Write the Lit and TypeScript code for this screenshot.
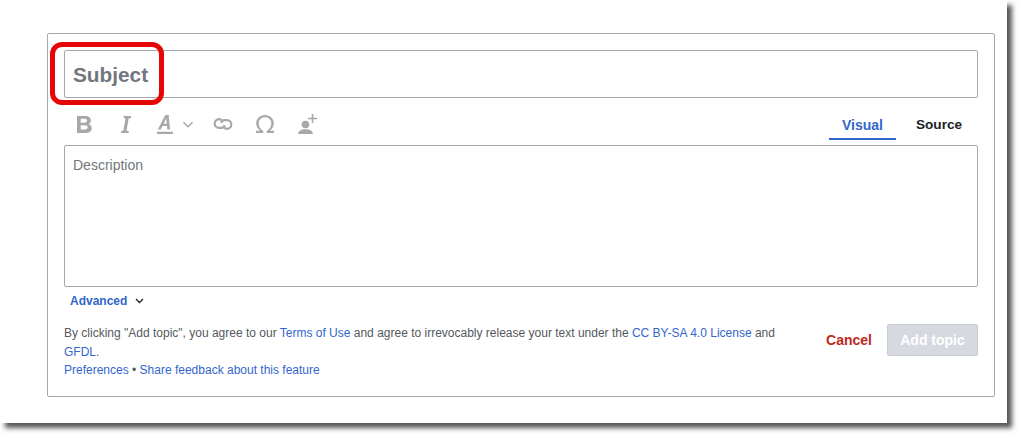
import { LitElement, html, css } from "lit";
import { customElement } from "lit/decorators.js";

@customElement("app-root")
export class AppRoot extends LitElement {
  static styles = css`
    :host { display: block; background: #fff; height: 438px; overflow: hidden; font-family: "Liberation Sans", Arial, sans-serif; }
    .sheet { width: 1007px; height: 423px; box-sizing: border-box; padding: 33px 12px 0 47px; background: #fff; box-shadow: 5px 5px 5px #555; position: relative; }
    .panel { width: 948px; height: 364px; box-sizing: border-box; border: 1px solid #a2a9b1; border-radius: 2px; padding: 16px 16px 0 16px; position: relative; }
    .subject { height: 48px; box-sizing: border-box; border: 1px solid #a2a9b1; border-radius: 2px; padding: 2px 8px 0; display: flex; align-items: center; font-size: 20.8px; font-weight: 700; color: #72777d; }
    .toolbar { height: 47px; display: flex; align-items: flex-start; }
    .icons { flex: 1; height: 47px; position: relative; }
    .ic { position: absolute; display: block; }
    .tabs { display: flex; padding-top: 12px; }
    .tab { font-size: 14px; font-weight: 700; height: 30px; box-sizing: border-box; padding-top: 7px; text-align: center; }
    .tab.visual { width: 67px; color: #3366cc; border-bottom: 2px solid #3366cc; }
    .tab.source { width: 82px; color: #202122; padding-left: 4px; font-size: 13.6px; }
    .desc { height: 142px; box-sizing: border-box; border: 1px solid #a2a9b1; border-radius: 2px; padding: 11px 8px; font-size: 14px; line-height: 16px; color: #72777d; }
    .advanced { display: flex; align-items: center; gap: 7px; margin: 6px 0 0 6px; height: 16px; font-size: 12px; font-weight: 700; color: #3366cc; }
    .foot { display: flex; margin-top: 15px; }
    .legal { width: 724px; font-size: 12px; line-height: 18.5px; color: #54595d; }
    .legal a { color: #3366cc; text-decoration: none; }
    .actions { flex: 1; display: flex; align-items: flex-start; justify-content: flex-end; gap: 15px; }
    .cancel { font-size: 14px; font-weight: 700; color: #c1281c; height: 32px; line-height: 32px; }
    .add { width: 91px; height: 32px; box-sizing: border-box; background: #d6d9df; border: 1px solid #c8ccd1; border-radius: 2px; color: #fff; font-size: 14px; font-weight: 700; display: flex; align-items: center; justify-content: center; }
    .callout { position: absolute; left: 50px; top: 42px; width: 114px; height: 63px; box-sizing: border-box; border: 5px solid #e50606; border-radius: 12px; }
  `;

  render() {
    return html`
      <div class="sheet">
        <div class="panel">
          <div class="subject">Subject</div>
          <div class="toolbar">
            <div class="icons">
              <svg class="ic" style="left:13px;top:18px" width="15" height="17" viewBox="1 2 13.800 16.600" preserveAspectRatio="none"><path fill="#a8a8a8" fill-rule="evenodd" d="M1 2h7.200c3.600 0 5.600 1.500 5.600 4.400 0 1.700-.9 3-2.400 3.500 2 .5 3.200 2 3.200 4.100 0 3-2.200 4.600-6 4.600H1zm3.400 2.800v3.700h3.300c1.600 0 2.500-.7 2.500-1.900 0-1.200-.9-1.800-2.500-1.800zm0 6.300v4.100h3.700c1.800 0 2.800-.7 2.800-2.100 0-1.300-1-2-2.800-2z"/></svg>
              <svg class="ic" style="left:57px;top:18px" width="10" height="17" viewBox="2 2 11 16" preserveAspectRatio="none"><path fill="#a8a8a8" d="M5 2h8v1.800l-2.600.5-2.300 11.400 2.400.6V18H2v-1.700l2.600-.6L7 4.300 5 3.800z"/></svg>
              <svg class="ic" style="left:93px;top:17px" width="16" height="19" viewBox="1 1 16 19" preserveAspectRatio="none"><path fill="#a8a8a8" fill-rule="evenodd" d="M9.300 1h3.400l1.300 14.500h-2.700l-.3-3.500H6.600l-1.900 3.500H1.800zm.9 3.200-2.500 5.600h2.900zM1 17.800h16V20H1z"/></svg>
              <svg class="ic" style="left:117px;top:22px" width="14" height="9" viewBox="0 0 12 8"><path fill="none" stroke="#a8a8a8" stroke-width="1.300" d="M2 2l4 4 4-4"/></svg>
              <svg class="ic" style="left:148px;top:19px" width="22" height="14" viewBox="0 0 20 14"><g fill="none" stroke="#a8a8a8" stroke-width="2.200"><path d="M8.500 3.200A3.900 3.900 0 0 0 6 2.200a4.300 4.300 0 0 0 0 8.600h2.300c2 0 3.200-1.300 3.200-2.800"/><path d="M11.500 10.800c.7.600 1.500 1 2.500 1a4.300 4.300 0 0 0 0-8.600h-2.300C9.700 3.200 8.500 4.500 8.500 6"/></g></svg>
              <svg class="ic" style="left:192px;top:17px" width="18" height="18" viewBox="1 2 16 16" preserveAspectRatio="none"><path fill="#a8a8a8" d="M1 16h3.900c-2.400-1.700-3.700-4-3.700-6.700C1.200 5.300 4.400 2 9 2s7.800 3.300 7.800 7.300c0 2.700-1.300 5-3.700 6.700H17v2h-6.400v-1.800c2.500-1.400 4-3.900 4-6.800 0-3-2.300-5.300-5.600-5.300S3.400 6.400 3.400 9.400c0 2.900 1.500 5.400 4 6.800V18H1z"/></svg>
              <svg class="ic" style="left:234px;top:16px" width="20" height="20" viewBox="0 0 20 20"><circle cx="7.500" cy="10.500" r="3.800" fill="#a8a8a8"/><path fill="#a8a8a8" d="M0 20c.3-3 3-4.800 7.500-4.800s7.200 1.800 7.500 4.800z"/><path fill="none" stroke="#a8a8a8" stroke-width="1.600" d="M14.500 0v9M10 4.500h9"/></svg>
            </div>
            <div class="tabs">
              <div class="tab visual">Visual</div>
              <div class="tab source">Source</div>
            </div>
          </div>
          <div class="desc">Description</div>
          <div class="advanced">
            <span>Advanced</span>
            <svg width="11" height="8" viewBox="0 0 10 8"><path fill="none" stroke="#202122" stroke-width="1.400" d="M1.500 2L5 5.500 8.500 2"/></svg>
          </div>
          <div class="foot">
            <div class="legal">
              By clicking "Add topic", you agree to our <a>Terms of Use</a> and agree to irrevocably release your text under the <a>CC BY-SA 4.0 License</a> and <a>GFDL</a>.<br />
              <a>Preferences</a> • <a>Share feedback about this feature</a>
            </div>
            <div class="actions">
              <span class="cancel">Cancel</span>
              <div class="add">Add topic</div>
            </div>
          </div>
        </div>
        <div class="callout"></div>
      </div>
    `;
  }
}
